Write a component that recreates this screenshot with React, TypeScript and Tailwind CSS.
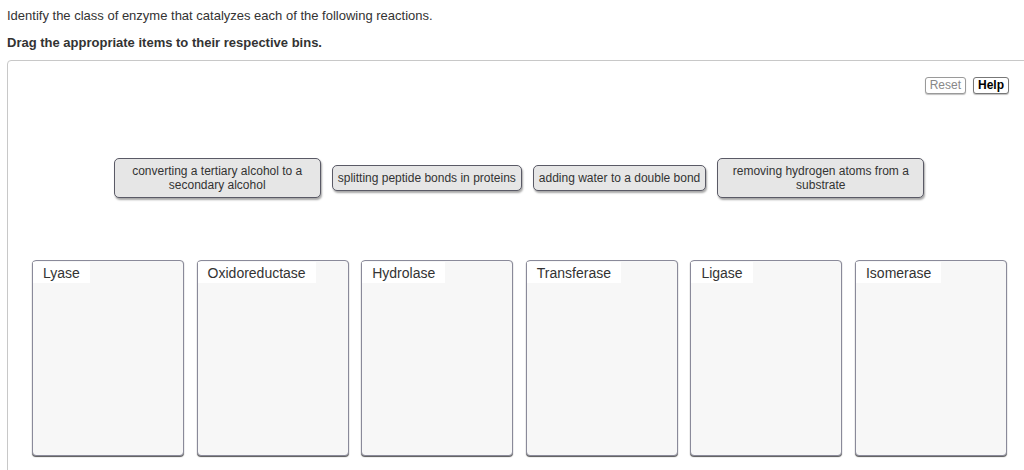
import React from "react";

const items = [
  { text: "converting a tertiary alcohol to a secondary alcohol", w: "w-[207px]" },
  { text: "splitting peptide bonds in proteins", w: "whitespace-nowrap" },
  { text: "adding water to a double bond", w: "whitespace-nowrap" },
  { text: "removing hydrogen atoms from a substrate", w: "w-[207px]" },
];

const bins = ["Lyase", "Oxidoreductase", "Hydrolase", "Transferase", "Ligase", "Isomerase"];

const Item: React.FC<{ text: string; w: string }> = ({ text, w }) => (
  <div
    className={`${w} rounded-[5px] border border-[#5a5a66] bg-[#e6e6e6] px-[5px] py-[5px] text-center text-[12px] leading-[14px] text-[#333] shadow-[1px_2px_2px_rgba(0,0,0,0.35)]`}
  >
    {text}
  </div>
);

const Bin: React.FC<{ label: string }> = ({ label }) => (
  <div className="h-[196px] w-[152px] rounded-[4px] border border-[#8a8a9a] bg-[#f7f7f7] shadow-[0_1px_1px_#555]">
    <div className="inline-block h-[21px] bg-white px-[10px] text-[14px] leading-[22px] text-[#333]">{label}</div>
  </div>
);

export default function App() {
  return (
    <div className="h-[470px] w-[1024px] overflow-hidden bg-white font-['Liberation_Sans',Arial,sans-serif] text-[#333]">
      <div className="px-[7px] pt-[8px]">
        <p className="text-[13px] leading-[16px]">Identify the class of enzyme that catalyzes each of the following reactions.</p>
        <p className="mt-[11px] text-[13px] font-bold leading-[16px]">Drag the appropriate items to their respective bins.</p>
      </div>
      <div className="ml-[7px] mt-[9px] h-[420px] w-[1024px] rounded-[4px] border border-[#c8c8c8] bg-white">
        <div className="flex justify-end gap-[7px] pr-[21px] pt-[16px]">
          <button className="h-[17px] rounded-[3px] border border-[#9a9a9a] bg-white px-[4px] text-[12px] leading-[15px] text-[#888] shadow-[0_1px_1px_rgba(0,0,0,0.25)]">
            Reset
          </button>
          <button className="h-[17px] rounded-[3px] border border-[#777] bg-white px-[4px] text-[12px] font-bold leading-[15px] text-black shadow-[0_1px_1px_rgba(0,0,0,0.25)]">
            Help
          </button>
        </div>
        <div className="mt-[64px] flex h-[40px] items-center justify-center gap-[11px]">
          {items.map((it) => (
            <Item key={it.text} text={it.text} w={it.w} />
          ))}
        </div>
        <div className="mt-[62px] flex gap-[12.6px] pl-[24px]">
          {bins.map((b) => (
            <Bin key={b} label={b} />
          ))}
        </div>
      </div>
    </div>
  );
}
